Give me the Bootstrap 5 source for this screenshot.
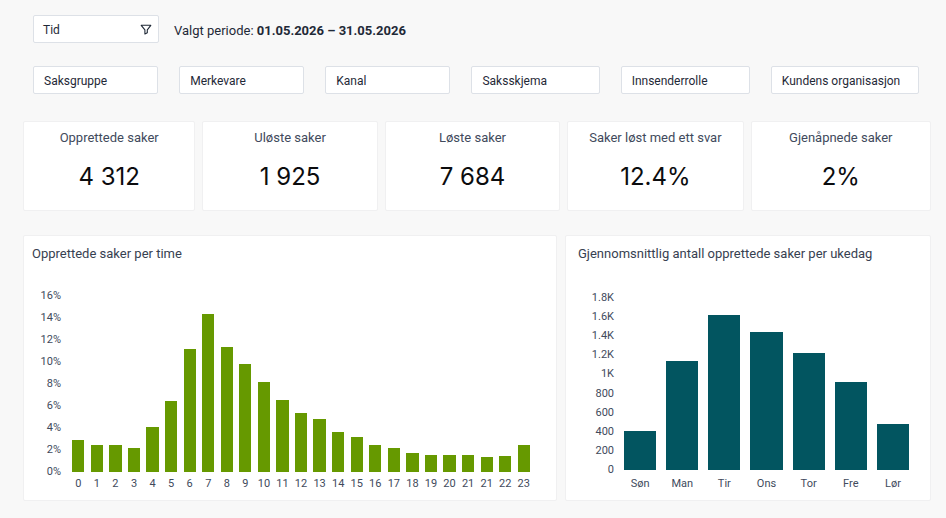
<!DOCTYPE html>
<html lang="no">
<head>
    <meta charset="UTF-8">
    <meta name="viewport" content="width=device-width, initial-scale=1.0">
    <title>Saker</title>
    <link href="https://cdn.jsdelivr.net/npm/bootstrap@5.3.2/dist/css/bootstrap.min.css" rel="stylesheet">
    <script src="https://cdn.jsdelivr.net/npm/bootstrap@5.3.2/dist/js/bootstrap.bundle.min.js"></script>
    <style>
        body { font-family: Roboto, "Liberation Sans", sans-serif; font-size: 12px; line-height: 16px; color: #1f2937; background: #f8f8f8; }
        .page { padding: 15px 15px 16px 23px; }
        .filters { padding: 0 12px 0 10px; }
        .filter-btn { height: 28px; padding: 2px 10px 0; font-size: 12px; line-height: 16px; color: #1f2937; background: #fff; border: 1px solid #dde1e7; border-radius: 2px; text-align: left; }
        .filter-btn:hover { background: #f3f4f6; border-color: #cbd0d8; }
        .time-btn { width: 126px; padding: 2px 6px 0 9px; }
        .period { margin-left: 15px; padding-top: 3px; font-size: 13px; }
        .filter-grid { display: grid; grid-template-columns: 125fr 125fr 125fr 128fr 129fr 148fr; gap: 21px; margin-top: 23px; }
        .kpi-grid { display: grid; grid-template-columns: 172fr 175fr 175fr 176fr 180fr; gap: 7px; margin-top: 27px; }
        .panel-grid { display: grid; grid-template-columns: 534fr 366fr; gap: 8px; margin-top: 24px; }
        .tile { background: #fff; border: 1px solid #f0f0f1; border-radius: 2px; }
        .kpi { height: 90px; padding-top: 7px; text-align: center; }
        .kpi h2 { margin: 0; font-size: 13px; line-height: 18px; font-weight: 400; color: #414a5c; }
        .kpi p { margin: 15px 0 0; font-family: Inter, "Liberation Sans", sans-serif; font-size: 24px; line-height: 30px; color: #0b0c0e; }
        .panel { padding: 9px 23px 8px 8px; }
        .panel h2 { margin: 0 0 25px; font-size: 13px; line-height: 18px; font-weight: 400; color: #374151; }
        .panel-days { padding: 9px 16px 8px 12px; }
        .panel-days h2 { margin-bottom: 27px; }
        .chart { font-size: 11px; line-height: 16px; color: #414a5c; }
        .y-axis { width: 29px; height: 192px; text-align: right; }
        .plot { padding-top: 8px; }
        .bars { height: 176px; }
        .bars div { flex: 1 1 0; }
        .bars span { width: 66%; background: #669900; }
        .x-axis { padding-top: 4px; }
        .x-axis span { flex: 1 1 0; min-width: 0; text-align: center; }
        .panel-days .y-axis { width: 36px; height: 188px; }
        .panel-days .plot { margin-left: -3px; }
        .panel-days .bars { height: 172px; }
        .panel-days .bars span { width: 76%; background: #025560; }
        .panel-days .x-axis { padding-top: 6px; }
    </style>
</head>
<body>

<main class="page">
    <div class="filters">
        <div class="d-flex align-items-center">
            <button type="button" class="filter-btn time-btn d-flex align-items-center justify-content-between">
                Tid
                <svg width="12" height="12" viewBox="0 0 12 12" fill="none" stroke="#1f2937" stroke-width="1.1" stroke-linejoin="round" aria-hidden="true">
                    <path d="M1.2 1.3h9.6L7.3 5.8v3L4.9 10V5.8z"/>
                </svg>
            </button>
            <div class="period">Valgt periode: <strong>01.05.2026 – 31.05.2026</strong></div>
        </div>
        <div class="filter-grid">
            <button type="button" class="filter-btn">Saksgruppe</button>
            <button type="button" class="filter-btn">Merkevare</button>
            <button type="button" class="filter-btn">Kanal</button>
            <button type="button" class="filter-btn">Saksskjema</button>
            <button type="button" class="filter-btn">Innsenderrolle</button>
            <button type="button" class="filter-btn">Kundens organisasjon</button>
        </div>
    </div>

    <div class="kpi-grid">
        <section class="tile kpi"><h2>Opprettede saker</h2><p>4 312</p></section>
        <section class="tile kpi"><h2>Uløste saker</h2><p>1 925</p></section>
        <section class="tile kpi"><h2>Løste saker</h2><p>7 684</p></section>
        <section class="tile kpi"><h2>Saker løst med ett svar</h2><p>12.4%</p></section>
        <section class="tile kpi"><h2>Gjenåpnede saker</h2><p>2%</p></section>
    </div>

    <div class="panel-grid">
        <section class="tile panel">
            <h2>Opprettede saker per time</h2>
            <div class="chart d-flex gap-2" id="hourChart"></div>
        </section>
        <section class="tile panel panel-days">
            <h2>Gjennomsnittlig antall opprettede saker per ukedag</h2>
            <div class="chart d-flex gap-2" id="dayChart"></div>
        </section>
    </div>
</main>

<script>
const hours = [
    ['0', 2.88], ['1', 2.45], ['2', 2.45], ['3', 2.15], ['4', 4.06], ['5', 6.45], ['6', 11.18],
    ['7', 14.33], ['8', 11.36], ['9', 9.82], ['10', 8.15], ['11', 6.58], ['12', 5.33], ['13', 4.79],
    ['14', 3.67], ['15', 3.18], ['16', 2.45], ['17', 2.15], ['18', 1.76], ['19', 1.55], ['20', 1.55],
    ['21', 1.52], ['21', 1.33], ['22', 1.45], ['23', 2.45]
];
const days = [
    ['Søn', 412], ['Man', 1141], ['Tir', 1622], ['Ons', 1448], ['Tor', 1224], ['Fre', 921], ['Lør', 481]
];

function drawChart(id, data, max, ticks) {
    const bars = data.map(d => `
        <div class="d-flex justify-content-center align-items-end">
            <span style="height: ${d[1] / max * 100}%"></span>
        </div>
    `).join('');
    document.getElementById(id).innerHTML = `
        <div class="y-axis d-flex flex-column justify-content-between">
            ${ticks.map(t => `<span>${t}</span>`).join('')}
        </div>
        <div class="plot flex-grow-1">
            <div class="bars d-flex">${bars}</div>
            <div class="x-axis d-flex">${data.map(d => `<span>${d[0]}</span>`).join('')}</div>
        </div>
    `;
}

drawChart('hourChart', hours, 16, ['16%', '14%', '12%', '10%', '8%', '6%', '4%', '2%', '0%']);
drawChart('dayChart', days, 1800, ['1.8K', '1.6K', '1.4K', '1.2K', '1K', '800', '600', '400', '200', '0']);
</script>

</body>
</html>
